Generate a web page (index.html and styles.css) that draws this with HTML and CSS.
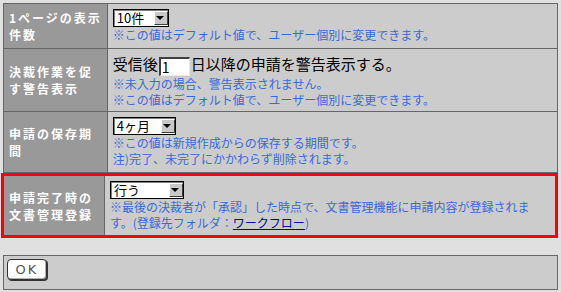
FILE: index.html
```html
<!DOCTYPE html>
<html lang="ja">
<head>
    <meta charset="UTF-8">
    <title>ワークフロー 個人設定</title>
    <link rel="stylesheet" href="styles.css">
</head>
<body>
    <table class="form">
        <tr>
            <th>1ページの表示<br>件数</th>
            <td>
                <span class="select"><select class="w56"><option>10件</option></select></span>
                <p class="note">※この値はデフォルト値で、ユーザー個別に変更できます。</p>
            </td>
        </tr>
        <tr>
            <th>決裁作業を促<br>す警告表示</th>
            <td>
                <div class="warn">受信後<input type="text" class="days" value="1">日以降の申請を警告表示する。</div>
                <p class="note">※未入力の場合、警告表示されません。<br>※この値はデフォルト値で、ユーザー個別に変更できます。</p>
            </td>
        </tr>
        <tr>
            <th>申請の保存期<br>間</th>
            <td>
                <span class="select"><select class="w63"><option>4ヶ月</option></select></span>
                <p class="note">※この値は新規作成からの保存する期間です。<br>注)完了、未完了にかかわらず削除されます。</p>
            </td>
        </tr>
    </table>

    <table class="form highlight">
        <tr>
            <th>申請完了時の<br>文書管理登録</th>
            <td>
                <span class="select"><select class="w74"><option>行う</option></select></span>
                <p class="note">※最後の決裁者が「承認」した時点で、文書管理機能に申請内容が登録されま<br>す。(登録先フォルダ：<a href="#">ワークフロー</a>)</p>
            </td>
        </tr>
    </table>

    <div class="actions">
        <button type="button">OK</button>
    </div>
</body>
</html>
```

FILE: styles.css
```css
body {
    margin: 0;
    padding: 3px;
    background-color: #e0e0e0;
    font-family: "Noto Sans CJK JP", "DejaVu Sans", sans-serif;
    font-size: 12px;
}
.form {
    width: 100%;
    border: 1px solid #666666;
    border-spacing: 0;
    background-color: #cccccc;
}
.form tr + tr th,
.form tr + tr td {
    border-top: 1px solid #666666;
}
.form th {
    width: 90px;
    padding: 0 5px;
    background-color: #999999;
    border-right: 1px solid #666666;
    color: #ffffff;
    font-size: 12px;
    font-weight: bold;
    letter-spacing: 2px;
    line-height: 17px;
    text-align: left;
    vertical-align: middle;
    white-space: nowrap;
}
.form td {
    padding: 5px;
    vertical-align: top;
    line-height: 16px;
}
.form tr:nth-child(2) td {
    padding-bottom: 3px;
}
.highlight {
    width: 557px;
    margin-left: -2px;
    border: 3px solid #ff0000;
}
.highlight td {
    padding-bottom: 4px;
}
.note {
    margin: 0;
    color: #3a6ad6;
    white-space: nowrap;
}
.note a {
    color: #000099;
}
.warn {
    font-size: 15px;
    line-height: 20px;
    color: #000000;
}
.days {
    width: 31px;
    height: 19px;
    margin: 0 1px;
    padding: 0 1px;
    box-sizing: border-box;
    border-width: 2px 1px 1px 2px;
    border-style: solid;
    border-color: #404040 #e8e8e8 #e8e8e8 #404040;
    background-color: #ffffff;
    font-family: "Noto Sans CJK JP", sans-serif;
    font-size: 14px;
    line-height: 15px;
    vertical-align: -3px;
}
.select {
    display: block;
    position: relative;
    width: fit-content;
    height: 18px;
}
.select select {
    -webkit-appearance: none;
    appearance: none;
    display: block;
    height: 18px;
    margin: 0;
    padding: 0 0 0 3px;
    border: 1px solid #000000;
    border-radius: 0;
    box-shadow: inset 1px 1px 0 #808080;
    background-color: #ffffff;
    color: #000000;
    font-family: "Noto Sans CJK JP", sans-serif;
    font-size: 13px;
    line-height: 16px;
}
.w56 { width: 56px; }
.w63 { width: 63px; }
.w74 { width: 74px; }
.select::before {
    content: "";
    position: absolute;
    top: 2px;
    right: 1px;
    width: 12px;
    height: 12px;
    background-color: #c8c8c8;
    border-style: solid;
    border-width: 1px;
    border-color: #ffffff #404040 #404040 #ffffff;
    pointer-events: none;
}
.select::after {
    content: "";
    position: absolute;
    top: 7px;
    right: 5px;
    border-left: 4px solid transparent;
    border-right: 4px solid transparent;
    border-top: 4px solid #000000;
    pointer-events: none;
}
.actions {
    margin-top: 17px;
    height: 27px;
    padding: 3px;
    border: 1px solid #666666;
    background-color: #cccccc;
    display: flex;
    align-items: flex-start;
}
.actions button {
    width: 40px;
    height: 21px;
    padding: 0;
    border: 1px solid #333333;
    border-radius: 4px;
    background-color: #ffffff;
    box-shadow: 1px 1px 0 #333333, inset -1px -1px 0 #b0b0b0;
    color: #555555;
    font-family: "DejaVu Sans", sans-serif;
    font-size: 13px;
    letter-spacing: 2px;
}
```
